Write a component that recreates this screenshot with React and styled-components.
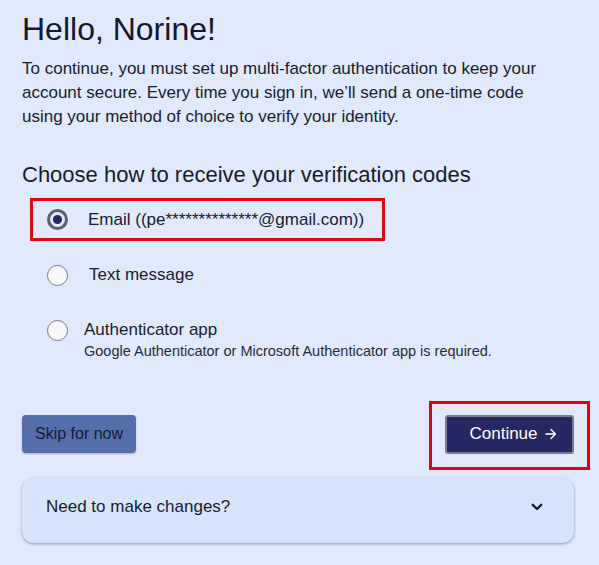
import React from "react";
import styled, { createGlobalStyle } from "styled-components";

const Global = createGlobalStyle`
  html, body { margin: 0; padding: 0; background: #e1eafd; }
  body { font-family: "Liberation Sans", Arial, sans-serif; color: #181c2c; }
  * { box-sizing: border-box; }
`;

const Page = styled.main`
  padding: 10px 25px 20px 22px;
  min-height: 565px;
`;

const Title = styled.h1`
  margin: 0;
  font-size: 32px;
  line-height: 38px;
  font-weight: 400;
  color: #141828;
`;

const Intro = styled.p`
  margin: 9px 0 0;
  max-width: 530px;
  font-size: 17px;
  line-height: 24px;
`;

const SectionTitle = styled.h2`
  margin: 33px 0 0;
  font-size: 22px;
  line-height: 26.4px;
  font-weight: 400;
`;

const OptionList = styled.div`
  margin-top: 10px;
  display: flex;
  flex-direction: column;
`;

const Option = styled.label`
  display: flex;
  align-items: ${(p) => (p.$top ? "flex-start" : "center")};
  margin-left: 8px;
  margin-top: ${(p) => p.$mt || 0}px;
  width: 355px;
  min-height: ${(p) => p.$h}px;
  padding-left: ${(p) => (p.$highlight ? 14 : 17)}px;
  padding-top: ${(p) => (p.$top ? 10.5 : 0)}px;
  border: ${(p) => (p.$highlight ? "3px solid #e8000b" : "none")};
  cursor: pointer;
`;

const Radio = styled.span`
  flex: none;
  width: 21px;
  height: 21px;
  border-radius: 50%;
  display: grid;
  place-items: center;
  background: ${(p) => (p.$checked ? "#e4e9f6" : "#f8f8f9")};
  border: ${(p) => (p.$checked ? "3.5px solid #5b5f6f" : "1px solid #7a7c85")};
  &::after {
    content: "";
    display: ${(p) => (p.$checked ? "block" : "none")};
    width: 9px;
    height: 9px;
    border-radius: 50%;
    background: #23286b;
  }
`;

const OptionText = styled.span`
  display: flex;
  flex-direction: column;
  margin-left: ${(p) => p.$gap}px;
`;

const OptionLabel = styled.span`
  font-size: 17px;
  line-height: 20px;
  white-space: nowrap;
`;

const OptionHint = styled.span`
  margin-top: 3px;
  font-size: 14.5px;
  line-height: 16px;
  color: #262b3a;
  white-space: nowrap;
`;

const Actions = styled.div`
  margin-top: 55.5px;
  display: flex;
  justify-content: space-between;
  align-items: center;
`;

const SkipButton = styled.button`
  font: inherit;
  font-size: 16px;
  height: 38px;
  width: 114px;
  padding: 0;
  border: none;
  border-radius: 4px;
  background: #566fab;
  color: #161a33;
  box-shadow: 0 1px 2px rgba(30, 40, 80, 0.3);
  cursor: pointer;
`;

const Highlight = styled.div`
  margin: -14px -16px -16px -16px;
  padding: 11px 13px 13px;
  border: 3px solid #e8000b;
`;

const ContinueButton = styled.button`
  font: inherit;
  font-size: 17px;
  height: 39px;
  width: 129px;
  padding: 0 0 0 7px;
  border: 2px solid #7a7d8e;
  border-radius: 3px;
  background: #252862;
  color: #ffffff;
  display: flex;
  align-items: center;
  justify-content: center;
  gap: 7px;
  cursor: pointer;
`;

const Accordion = styled.div`
  margin-top: 24.5px;
  height: 65px;
  border-radius: 12px;
  background: #d7e5fc;
  box-shadow: 0 1px 3px rgba(40, 50, 80, 0.45);
  display: flex;
  align-items: center;
  justify-content: space-between;
  padding: 0 31px 7px 24px;
  font-size: 17px;
  cursor: pointer;
`;

const Arrow = () => (
  <svg width="12" height="12" viewBox="0 0 12 12" fill="none" stroke="#ffffff" strokeWidth="1.4" strokeLinecap="round" strokeLinejoin="round">
    <path d="M1 6h9.5M6 1.5l4.5 4.5L6 10.5" />
  </svg>
);

const Chevron = () => (
  <svg width="12" height="8" viewBox="0 0 12 8" fill="none" stroke="#1b2030" strokeWidth="2.4" strokeLinecap="round" strokeLinejoin="round">
    <path d="M1.8 1.8L6 6l4.2-4.2" />
  </svg>
);

export default function App() {
  return (
    <>
      <Global />
      <Page>
        <Title>Hello, Norine!</Title>
        <Intro>
          To continue, you must set up multi-factor authentication to keep your
          account secure. Every time you sign in, we’ll send a one-time code
          using your method of choice to verify your identity.
        </Intro>
        <SectionTitle>Choose how to receive your verification codes</SectionTitle>
        <OptionList>
          <Option $highlight $h={43}>
            <Radio $checked />
            <OptionText $gap={20}>
              <OptionLabel>Email ((pe**************@gmail.com))</OptionLabel>
            </OptionText>
          </Option>
          <Option $h={40} $mt={14}>
            <Radio />
            <OptionText $gap={21}>
              <OptionLabel>Text message</OptionLabel>
            </OptionText>
          </Option>
          <Option $h={50} $mt={14} $top>
            <Radio />
            <OptionText $gap={16}>
              <OptionLabel>Authenticator app</OptionLabel>
              <OptionHint>Google Authenticator or Microsoft Authenticator app is required.</OptionHint>
            </OptionText>
          </Option>
        </OptionList>
        <Actions>
          <SkipButton>Skip for now</SkipButton>
          <Highlight>
            <ContinueButton>
              Continue <Arrow />
            </ContinueButton>
          </Highlight>
        </Actions>
        <Accordion>
          <span>Need to make changes?</span>
          <Chevron />
        </Accordion>
      </Page>
    </>
  );
}
